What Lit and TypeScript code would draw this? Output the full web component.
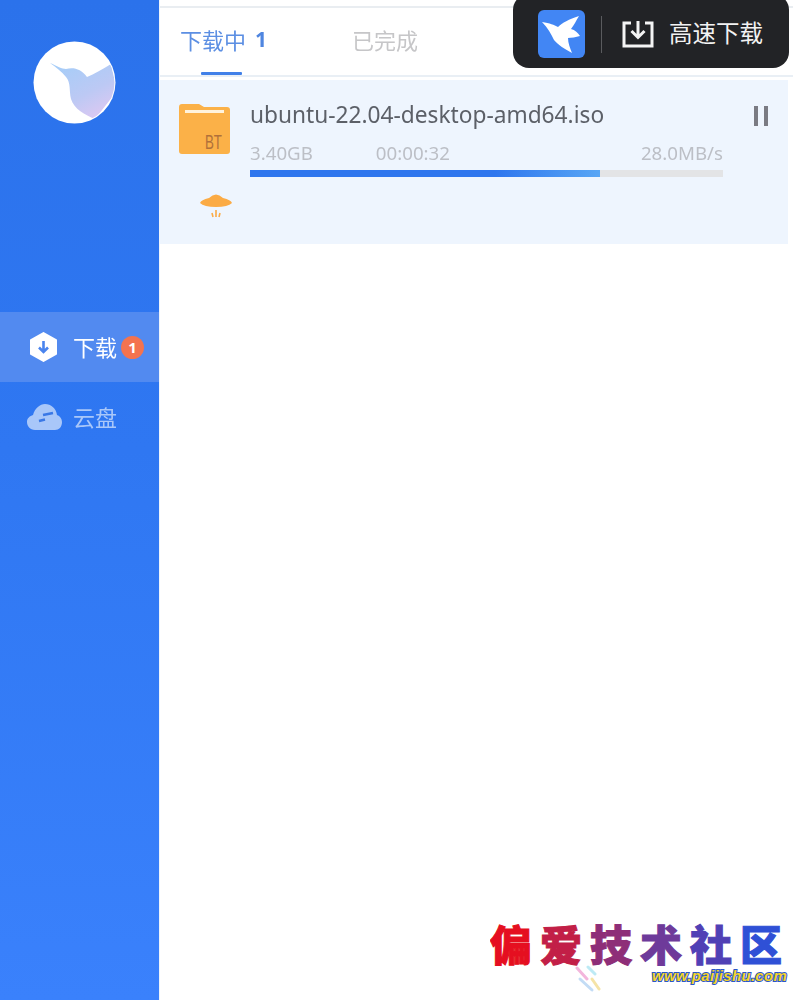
import { LitElement, html, css } from "lit";
import { customElement } from "lit/decorators.js";

@customElement("app-root")
export class AppRoot extends LitElement {
  static styles = css`
    :host { display: block; width: 793px; height: 1000px; position: relative; overflow: hidden; background: #fff; font-family: "Noto Sans", "Noto Sans CJK SC", sans-serif; }
    .app { display: flex; height: 1000px; }
    .side { width: 159px; flex: none; background: linear-gradient(180deg, #2b72eb 0%, #2f77f2 45%, #3a81fc 100%); display: flex; flex-direction: column; }
    .logo { margin: 41px 0 0 33px; width: 83px; height: 83px; display: block; }
    .nav { margin-top: 188px; display: flex; flex-direction: column; }
    .item { height: 70px; display: flex; align-items: center; font-size: 22px; position: relative; }
    .item.on { background: #528af0; color: #fff; padding-left: 29px; }
    .item.off { color: #a9c7f9; padding-left: 27px; }
    .item .t { margin-left: 15px; line-height: 1; filter: blur(.3px); }
    .item.off .t { margin-left: 11px; }
    .badge { width: 23px; height: 23px; border-radius: 50%; background: #f4734f; color: #fff; font-size: 15px; font-weight: 700; display: flex; align-items: center; justify-content: center; margin-left: 4px; line-height: 1; }
    .main { flex: 1; min-width: 0; display: flex; flex-direction: column; border-left: 1px solid #eef4fc; }
    .top { height: 6px; border-bottom: 2px solid #e9edf1; flex: none; }
    .tabs { height: 63px; padding: 0 0 4px 20px; flex: none; border-bottom: 2px solid #e9eff5; display: flex; align-items: center; font-size: 22px; position: relative; }
    .tab { line-height: 1; filter: blur(.4px); }
    .tab.on { color: #5c8fe3; width: 172px; flex: none; display: flex; align-items: center; gap: 9px; }
    .tab.on b { color: #4f86e0; font-size: 21px; }
    .tab.off { color: #c6c6c8; }
    .line { position: absolute; left: 41px; bottom: 0; width: 41px; height: 3px; background: #4180e8; border-radius: 1px; }
    .row { margin: 3px 5px 0 0; height: 164px; background: #eef5fe; display: flex; flex: none; padding: 23px 0 0 19px; box-sizing: border-box; }
    .icons { width: 71px; flex: none; display: flex; flex-direction: column; }
    .ufo { margin: 37px 0 0 21px; display: block; }
    .info { width: 473px; flex: none; display: flex; flex-direction: column; }
    .name { font-size: 22.7px; line-height: 24px; color: #5c6068; filter: blur(.3px); }
    .stats { margin-top: 16px; display: flex; font-size: 18.7px; line-height: 20px; color: #bcbfc6; filter: blur(.3px); }
    .stats .time { margin-left: 63px; }
    .stats .speed { margin-left: auto; }
    .bar { margin-top: 7px; height: 7px; background: #e3e4e6; }
    .fill { height: 100%; background: linear-gradient(90deg, #2e76ee 0%, #2e76ee 70%, #58a6f5 100%); }
    .pause { margin: 3px 0 0 31px; display: flex; gap: 6px; height: 20px; }
    .pause i { width: 4px; height: 20px; background: #7a7b83; display: block; }
    .pop { position: absolute; left: 513px; top: -6px; width: 276px; height: 74px; background: #222326; border-radius: 16px; display: flex; align-items: center; padding: 6px 0 0 25px; box-sizing: border-box; }
    .pop .sq { width: 47px; height: 48px; border-radius: 6px; background: #4286f4; display: block; flex: none; }
    .pop .div { width: 1px; height: 37px; background: #5a5b5e; margin: 0 20px 0 16px; flex: none; }
    .pop .txt { margin-left: 15px; color: #f2f2f2; font-size: 23.5px; line-height: 1; white-space: nowrap; }
    .wm { position: absolute; left: 490px; top: 920px; width: 300px; height: 70px; }
    .wmt { display: flex; gap: 8px; font-family: "Noto Sans CJK SC", sans-serif; font-weight: 900; font-size: 42px; line-height: 46px; height: 46px; overflow: hidden; }
    .wmt span { display: block; -webkit-text-stroke: 1px currentColor; }
    .c1 { color: #e50f20; } .c2 { color: #c21f47; } .c3 { color: #8e2e78; } .c4 { color: #6e3a9a; } .c5 { color: #5040b5; } .c6 { color: #2f50d6; }
    .url { position: absolute; left: 162px; top: 48px; color: #f4d42a; font: italic 700 15px/16px "Liberation Sans", sans-serif; letter-spacing: .3px; -webkit-text-stroke: 2px #2a56c8; paint-order: stroke fill; white-space: nowrap; }
    .spark { position: absolute; left: 85px; top: 45px; display: block; }
  `;

  render() {
    return html`
      <div class="app">
        <aside class="side">
          <svg class="logo" viewBox="0 0 83 83">
            <defs>
              <linearGradient id="bd" x1=".2" y1="0" x2=".8" y2="1"><stop offset="0" stop-color="#a6cdf8"/><stop offset=".55" stop-color="#bcc9f4"/><stop offset="1" stop-color="#e0c8f2"/></linearGradient>
              <clipPath id="cc"><circle cx="41.5" cy="41.5" r="40"/></clipPath>
            </defs>
            <circle cx="41.5" cy="41.5" r="41" fill="#fff"/>
            <path clip-path="url(#cc)" d="M17 22 C24 25 29 28 33 28 C41 26 48 28 54 36 C61 33 70 28 78 23 L84 50 L62 78 C52 74 41 68 38 58 C36 50 38 42 33 36 C29 31 23 26 17 22 Z" fill="url(#bd)"/>
          </svg>
          <nav class="nav">
            <div class="item on">
              <svg width="29" height="30" viewBox="0 0 29 30"><path d="M14.5 1 L27 8 V22 L14.5 29 L2 22 V8 Z" fill="#fff" stroke="#fff" stroke-width="2" stroke-linejoin="round"/><path d="M14.5 9 V19 M10 15.5 L14.5 20 L19 15.5" fill="none" stroke="#4a84ee" stroke-width="2.6"/></svg>
              <span class="t">下载</span><span class="badge">1</span>
            </div>
            <div class="item off">
              <svg width="35" height="27" viewBox="0 0 35 27"><path d="M8 26 C3 26 0 22 0 18 C0 14 3 12 6 11 C8 4 13 0 18 0 C24 0 29 4 30 11 C33 12 35 15 35 18 C35 23 32 26 28 26 Z" fill="#a9c7f9"/><path d="M16 11 L26 9 M12 17 L18 15.5" stroke="#3a78e6" stroke-width="2.6"/></svg>
              <span class="t">云盘</span>
            </div>
          </nav>
        </aside>
        <main class="main">
          <div class="top"></div>
          <div class="tabs">
            <div class="tab on">下载中 <b>1</b></div>
            <div class="tab off">已完成</div>
            <div class="line"></div>
          </div>
          <section class="row">
            <div class="icons">
              <svg width="52" height="52" viewBox="0 0 52 52">
                <path d="M0 4 Q0 1 3 1 H20 L25 4 H48 Q51 4 51 7 V48 Q51 51 48 51 H3 Q0 51 0 48 Z" fill="#fbb148"/>
                <rect x="6" y="7" width="39" height="3" fill="#fff3dc"/>
                <text x="26" y="46" font-family="Liberation Sans, sans-serif" font-size="21" fill="#b0703a" textLength="17" lengthAdjust="spacingAndGlyphs">BT</text>
              </svg>
              <svg class="ufo" width="32" height="26" viewBox="0 0 32 26">
                <path d="M9 6 Q16 -1 23 6 Q31 8 32 11 Q28 15 16 15 Q4 15 0 11 Q1 8 9 6 Z" fill="#fbab45"/>
                <path d="M16 18 V25 M12 21 L13 25 M20 21 L19 25" stroke="#fbab45" stroke-width="1.6" fill="none"/>
              </svg>
            </div>
            <div class="info">
              <div class="name">ubuntu-22.04-desktop-amd64.iso</div>
              <div class="stats"><span>3.40GB</span><span class="time">00:00:32</span><span class="speed">28.0MB/s</span></div>
              <div class="bar"><div class="fill" style="width:74%"></div></div>
            </div>
            <div class="pause"><i></i><i></i></div>
          </section>
        </main>
      </div>
      <div class="pop">
        <svg class="sq" viewBox="0 0 47 48"><path d="M4 12 C12 13 16 15 20 17 C24 13 31 9 41 6 C38 11 36 15 33 19 C37 20 40 23 42 26 C38 27 33 28 30 28 C30 33 32 38 34 43 C27 39 20 35 16 30 C13 24 10 18 4 12 Z" fill="#fff"/></svg>
        <span class="div"></span>
        <svg width="32" height="28" viewBox="0 0 32 28" fill="none" stroke="#f4f4f4" stroke-width="3"><path d="M9 3 H2 V26 H30 V3 H23"/><path d="M16 1 V17 M9.5 11 L16 17.5 L22.5 11"/></svg>
        <span class="txt">高速下载</span>
      </div>
      <div class="wm">
        <div class="wmt"><span class="c1">偏</span><span class="c2">爱</span><span class="c3">技</span><span class="c4">术</span><span class="c5">社</span><span class="c6">区</span></div>
        <svg class="spark" width="28" height="28" viewBox="0 0 28 28" fill="none" stroke-width="3" stroke-linecap="round"><path d="M2 3 L12 14" stroke="#f3b6dc"/><path d="M13 2 L20 9" stroke="#bdeaf5"/><path d="M5 14 L17 25" stroke="#c3dcf5"/><path d="M17 14 L24 24" stroke="#f5e3a6"/></svg>
        <div class="url">www.paijishu.com</div>
      </div>
    `;
  }
}
